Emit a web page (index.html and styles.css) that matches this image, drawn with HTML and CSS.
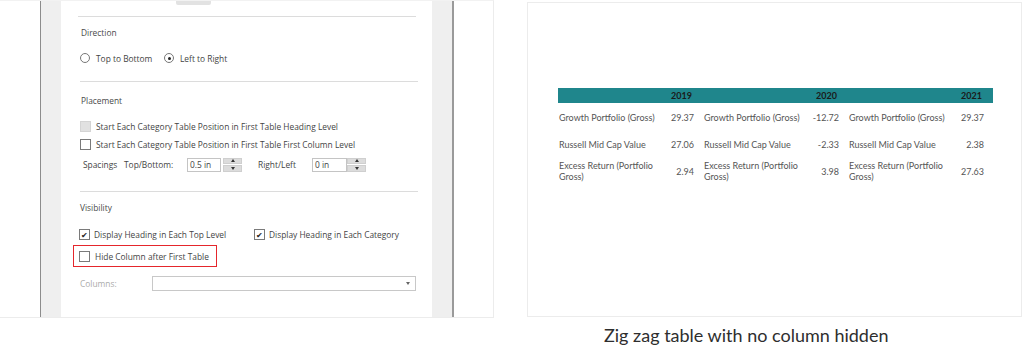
FILE: index.html
```html
<!DOCTYPE html>
<html>
<head>
<meta charset="utf-8">
<title>Zig zag table settings</title>
<link rel="stylesheet" href="styles.css">
</head>
<body>
<div class="page">

  <div class="shot shot-left">
    <div class="margin"></div>
    <div class="rule"></div>
    <div class="gutter"></div>
    <div class="panel">
      <div class="tab"></div>
      <div class="sep sep-first"></div>

      <div class="label label-first">Direction</div>
      <div class="row row-radio">
        <span class="opt opt-top"><span class="radio"></span>Top to Bottom</span>
        <span class="opt"><span class="radio on"></span>Left to Right</span>
      </div>
      <div class="sep sep-dir"></div>

      <div class="label label-place">Placement</div>
      <div class="row row-cb1"><span class="box off"></span>Start Each Category Table Position in First Table Heading Level</div>
      <div class="row row-cb2"><span class="box"></span>Start Each Category Table Position in First Table First Column Level</div>
      <div class="row row-spacing">
        <span class="sp-lbl">Spacings</span>
        <span class="sp-top">Top/Bottom:</span>
        <span class="field field-a">0.5 in</span>
        <span class="spin"><span class="up"></span><span class="down"></span></span>
        <span class="sp-right">Right/Left</span>
        <span class="field field-b">0 in</span>
        <span class="spin spin-b"><span class="up"></span><span class="down"></span></span>
      </div>
      <div class="sep sep-place"></div>

      <div class="label label-vis">Visibility</div>
      <div class="row row-check">
        <span class="opt opt-level"><span class="box ticked">&#10004;</span>Display Heading in Each Top Level</span>
        <span class="opt"><span class="box ticked">&#10004;</span>Display Heading in Each Category</span>
      </div>
      <div class="mark">
        <span class="box"></span>Hide Column after First Table
      </div>
      <div class="row row-cols">
        <span class="cols-lbl">Columns:</span>
        <span class="select"><span class="caret"></span></span>
      </div>
    </div>
    <div class="gutter"></div>
    <div class="rule rule-dark"></div>
  </div>

  <div class="right-col">
    <div class="shot shot-right">
      <div class="zigzag">
        <div class="hd"></div><div class="hd num">2019</div>
        <div class="hd"></div><div class="hd num">2020</div>
        <div class="hd"></div><div class="hd num">2021</div>

        <div class="cell">Growth Portfolio (Gross)</div><div class="cell num">29.37</div>
        <div class="cell">Growth Portfolio (Gross)</div><div class="cell num">-12.72</div>
        <div class="cell">Growth Portfolio (Gross)</div><div class="cell num">29.37</div>

        <div class="cell">Russell Mid Cap Value</div><div class="cell num">27.06</div>
        <div class="cell">Russell Mid Cap Value</div><div class="cell num">-2.33</div>
        <div class="cell">Russell Mid Cap Value</div><div class="cell num">2.38</div>

        <div class="cell">Excess Return (Portfolio Gross)</div><div class="cell num">2.94</div>
        <div class="cell">Excess Return (Portfolio Gross)</div><div class="cell num">3.98</div>
        <div class="cell">Excess Return (Portfolio Gross)</div><div class="cell num">27.63</div>
      </div>
    </div>
    <p class="caption">Zig zag table with no column hidden</p>
  </div>

</div>
</body>
</html>
```

FILE: styles.css
```css
html, body {margin: 0; padding: 0; background: #fff;}
body {width: 1024px; height: 350px; overflow: hidden;}

.page {display: flex; align-items: flex-start;}

/* left screenshot */
.shot {border: 1px solid #ececec; box-sizing: border-box; background: #fff;}
.shot-left {display: flex; width: 494px; height: 318px; border-left: 0; border-top-color: #f2f2f2;}
.margin {width: 40px;}
.rule {width: 1px; background: #8c8c8c;}
.rule-dark {width: 2px; background: #9a9a9a;}
.gutter {width: 20px; background: #efefef;}
.panel {
 width: 371px;
 padding: 0 16px 0 17px;
 box-sizing: border-box;
 font-family: "Open Sans", "Noto Sans", sans-serif;
 font-size: 8.4px;
 color: #444;
 display: flex;
 flex-direction: column;
}

.tab {width: 35px; height: 4px; margin-left: 98px; background: #e2e2e2; border-radius: 0 0 2px 2px;}
.sep {height: 1px; background: #dcdcdc;}
.sep-first {margin-top: 11px;}
.sep-dir {margin-top: 16px; margin-left: 2px; margin-right: -2px;}
.sep-place {margin-top: 19px; margin-left: 2px; margin-right: -2px;}

.label {height: 12px; line-height: 12px; padding-left: 3px; color: #4a4a4a;}
.label-first {margin-top: 10px;}
.label-place {margin-top: 13px;}
.label-vis {margin-top: 10px; padding-left: 2px;}

.row {display: flex; align-items: center; height: 14px; padding-left: 2px; white-space: nowrap;}
.row-radio {margin-top: 12px;}
.row-cb1 {margin-top: 12px;}
.row-cb2 {margin-top: 4px;}
.row-spacing {margin-top: 6px; height: 15px; padding-left: 5px;}
.row-check {margin-top: 13px; padding-left: 1px;}
.row-cols {margin-top: 9px; height: 15px;}

.opt {display: flex; align-items: center;}
.opt-top {width: 84px;}
.opt-level {width: 175px;}

.radio {
 width: 8px; height: 8px; border: 1px solid #777; border-radius: 50%;
 margin-right: 6px; display: flex; align-items: center; justify-content: center; background: #fff;
}
.radio.on::after {content: ""; width: 3px; height: 3px; border-radius: 50%; background: #222;}

.box {
 width: 9px; height: 9px; border: 1px solid #7a7a7a; background: #fff;
 margin-right: 5px; flex: none;
 display: flex; align-items: center; justify-content: center;
 font-size: 8px; line-height: 9px; color: #222;
}
.box.off {background: #e1e1e1; border-color: #d4d4d4;}
.box.ticked {margin-right: 4px;}

.sp-lbl {width: 41px;}
.sp-top {width: 63px;}
.sp-right {width: 54px; margin-left: 16px;}
.field {
 height: 14px; box-sizing: border-box; border: 1px solid #c4c4c4;
 padding-left: 2px; line-height: 12px; background: #fff;
}
.field-a {width: 34px;}
.field-b {width: 35px;}
.spin {width: 19px; height: 14px; display: flex; flex-direction: column; gap: 1px; margin-left: 2px;}
.spin-b {margin-left: 0;}
.spin span {flex: 1; background: #dcdcdc; border: 1px solid #cfcfcf; position: relative;}
.spin .up::after, .spin .down::after {
 content: ""; position: absolute; left: 50%; top: 50%; margin: -1px 0 0 -2px;
 border-left: 2px solid transparent; border-right: 2px solid transparent;
}
.spin .up::after {border-bottom: 3px solid #333; margin-top: -2px;}
.spin .down::after {border-top: 3px solid #333; margin-top: -1px;}

.mark {
 display: flex; align-items: center; align-self: flex-start;
 margin-top: 4px; margin-left: -5px;
 width: 144px; height: 22px; box-sizing: border-box;
 border: 1.5px solid #e5262c; padding-left: 5px;
 white-space: nowrap;
}

.cols-lbl {width: 72px; color: #ababab;}
.select {width: 264px; height: 15px; box-sizing: border-box; border: 1px solid #c8c8c8; position: relative; background: #fff;}
.caret {
 position: absolute; right: 5px; top: 5px;
 border-left: 2px solid transparent; border-right: 2px solid transparent; border-top: 3px solid #666;
}

/* right screenshot */
.right-col {margin-left: 33px;}
.shot-right {width: 495px; height: 315px; margin-top: 2px; padding: 85px 0 0 30px;}

.zigzag {
 display: grid;
 grid-template-columns: repeat(3, 103px 42px);
 grid-template-rows: 15px 28px 26px 28px;
 font-family: Lato, "Open Sans", sans-serif;
 font-size: 9px;
 line-height: 11px;
 color: #555;
}
.hd {background: #1f868c; color: #1b1b1b; font-weight: bold; display: flex; align-items: center; justify-content: flex-end; padding-right: 11px;}
.cell {display: flex; align-items: center; padding-left: 1px;}
.cell.num {justify-content: flex-end; padding-right: 9px;}

.caption {
 margin: 7px 0 0 77px;
 font-family: Lato, "Open Sans", sans-serif;
 font-size: 18px;
 line-height: 22px;
 color: #2e2e2e;
}
```
